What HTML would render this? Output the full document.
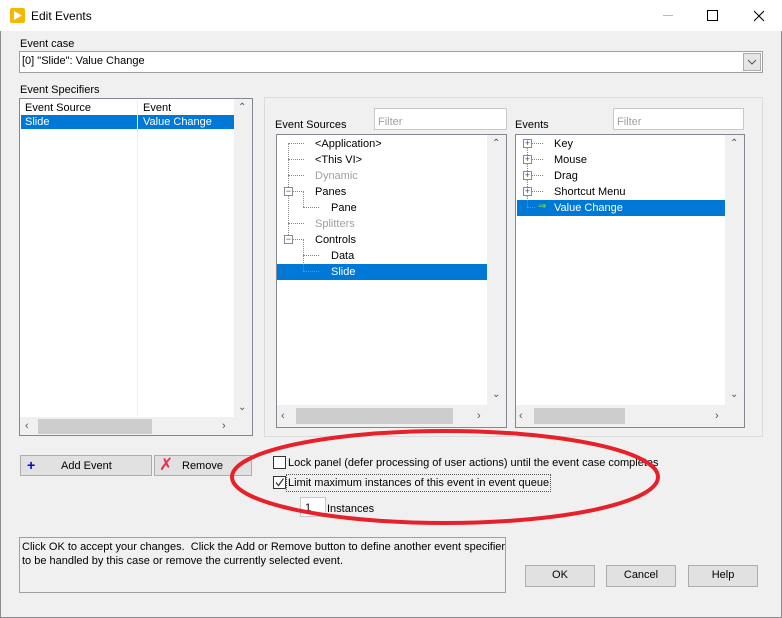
<!DOCTYPE html>
<html><head><meta charset="utf-8"><style>
*{box-sizing:border-box;margin:0;padding:0}
body{width:782px;height:618px;background:#f0f0f0;font-family:"Liberation Sans",sans-serif;font-size:11px;color:#000;position:relative;overflow:hidden}
.a{position:absolute}
.t{position:absolute;white-space:nowrap;line-height:14px}
.box{position:absolute;background:#fff;border:1px solid #828790}
.btn{position:absolute;background:#e1e1e1;border:1px solid #adadad;text-align:center;line-height:19px;font-size:12px}
.sel{position:absolute;background:#0078d7;color:#fff}
.gray{color:#a0a0a0}
.dv{position:absolute;border-left:1px dotted #888}
.dh{position:absolute;border-top:1px dotted #888}
.sb{position:absolute;background:#f0f0f0}
.pm{position:absolute;width:9px;height:9px;border:1px solid #8a8a8a;background:#fff;font-size:9px;line-height:7px;text-align:center;color:#2a4aa0}
</style></head><body>
<div class="a" style="left:0;top:0;width:782px;height:618px;border:1px solid #8c8c8c;border-top:none"></div>
<div class="a" style="left:0;top:0;width:782px;height:31px;background:#fff"></div>
<div class="a" style="left:10px;top:8px;width:15px;height:15px;background:#f5b800;border-radius:2px"></div>
<svg class="a" style="left:13px;top:10px" width="10" height="11"><path d="M1 1 L9 5.5 L1 10Z" fill="#fff"/></svg>
<div class="t" style="left:31px;top:9px;font-size:12px">Edit Events</div>
<div class="a" style="left:663px;top:15px;width:10px;height:1px;background:#bbb"></div>
<div class="a" style="left:707px;top:10px;width:11px;height:11px;border:1px solid #000"></div>
<svg class="a" style="left:753px;top:10px" width="12" height="12"><path d="M1 1L11 11M11 1L1 11" stroke="#000" stroke-width="1.1"/></svg>

<div class="t" style="left:20px;top:37px">Event case</div>
<div class="box" style="left:19px;top:51px;width:744px;height:22px;border-color:#a0a0a0"></div>
<div class="t" style="left:22px;top:54px">[0] "Slide": Value Change</div>
<div class="a" style="left:743px;top:53px;width:18px;height:18px;background:#e5e5e5;border:1px solid #adadad"></div>
<svg class="a" style="left:747px;top:59px" width="10" height="6"><path d="M1 1L5 5L9 1" stroke="#555" fill="none"/></svg>

<div class="t" style="left:20px;top:83px">Event Specifiers</div>
<div class="box" style="left:19px;top:98px;width:234px;height:338px"></div>
<div class="t" style="left:25px;top:101px">Event Source</div>
<div class="t" style="left:143px;top:101px">Event</div>
<div class="a" style="left:137px;top:100px;width:1px;height:316px;background:#f0f0f0"></div>
<div class="sel" style="left:21px;top:115px;width:116px;height:14px"></div>
<div class="sel" style="left:138px;top:115px;width:96px;height:14px"></div>
<div class="t" style="left:25px;top:115px;color:#fff">Slide</div>
<div class="t" style="left:143px;top:115px;color:#fff">Value Change</div>
<div class="sb" style="left:234px;top:99px;width:18px;height:318px"></div>
<div class="t" style="left:238px;top:101px;font-size:10px;color:#555">&#8963;</div>
<div class="t" style="left:238px;top:401px;font-size:10px;color:#555">&#8964;</div>
<div class="sb" style="left:20px;top:417px;width:232px;height:18px"></div>
<div class="a" style="left:38px;top:419px;width:114px;height:15px;background:#cdcdcd"></div>
<div class="t" style="left:25px;top:419px;color:#555">&#8249;</div>
<div class="t" style="left:222px;top:419px;color:#555">&#8250;</div>

<div class="a" style="left:264px;top:97px;width:499px;height:340px;border:1px solid #dcdcdc"></div>
<div class="t" style="left:275px;top:118px">Event Sources</div>
<div class="box" style="left:374px;top:108px;width:133px;height:22px;border-color:#c8c8c8"></div>
<div class="t gray" style="left:378px;top:115px">Filter</div>
<div class="box" style="left:276px;top:134px;width:231px;height:294px"></div>
<div class="sb" style="left:487px;top:135px;width:19px;height:270px"></div>
<div class="t" style="left:492px;top:137px;font-size:10px;color:#555">&#8963;</div>
<div class="t" style="left:492px;top:388px;font-size:10px;color:#555">&#8964;</div>
<div class="sb" style="left:277px;top:405px;width:229px;height:22px"></div>
<div class="a" style="left:296px;top:408px;width:157px;height:16px;background:#cdcdcd"></div>
<div class="t" style="left:281px;top:409px;color:#555">&#8249;</div>
<div class="t" style="left:477px;top:409px;color:#555">&#8250;</div>
<div class="sel" style="left:277px;top:264px;width:210px;height:16px"></div>
<div class="dv" style="left:288px;top:143px;height:96px"></div>
<div class="dh" style="left:288px;top:143px;width:16px"></div>
<div class="dh" style="left:288px;top:159px;width:16px"></div>
<div class="dh" style="left:288px;top:175px;width:16px"></div>
<div class="dh" style="left:288px;top:191px;width:16px"></div>
<div class="dh" style="left:288px;top:223px;width:16px"></div>
<div class="dh" style="left:288px;top:239px;width:16px"></div>
<div class="dv" style="left:303px;top:191px;height:16px"></div>
<div class="dh" style="left:303px;top:207px;width:16px"></div>
<div class="dv" style="left:303px;top:239px;height:32px"></div>
<div class="dh" style="left:303px;top:255px;width:16px"></div>
<div class="dh" style="left:303px;top:271px;width:16px"></div>
<div class="pm" style="left:284px;top:187px">−</div>
<div class="pm" style="left:284px;top:235px">−</div>
<div class="t" style="left:315px;top:137px">&lt;Application&gt;</div>
<div class="t" style="left:315px;top:153px">&lt;This VI&gt;</div>
<div class="t gray" style="left:315px;top:169px">Dynamic</div>
<div class="t" style="left:315px;top:185px">Panes</div>
<div class="t" style="left:331px;top:201px">Pane</div>
<div class="t gray" style="left:315px;top:217px">Splitters</div>
<div class="t" style="left:315px;top:233px">Controls</div>
<div class="t" style="left:331px;top:249px">Data</div>
<div class="t" style="left:331px;top:265px;color:#fff">Slide</div>

<div class="t" style="left:515px;top:118px">Events</div>
<div class="box" style="left:613px;top:108px;width:131px;height:22px;border-color:#c8c8c8"></div>
<div class="t gray" style="left:617px;top:115px">Filter</div>
<div class="box" style="left:515px;top:134px;width:230px;height:294px"></div>
<div class="sb" style="left:725px;top:135px;width:19px;height:270px"></div>
<div class="t" style="left:730px;top:137px;font-size:10px;color:#555">&#8963;</div>
<div class="t" style="left:730px;top:388px;font-size:10px;color:#555">&#8964;</div>
<div class="sb" style="left:516px;top:405px;width:228px;height:22px"></div>
<div class="a" style="left:534px;top:408px;width:91px;height:16px;background:#cdcdcd"></div>
<div class="t" style="left:519px;top:409px;color:#555">&#8249;</div>
<div class="t" style="left:715px;top:409px;color:#555">&#8250;</div>
<div class="sel" style="left:517px;top:200px;width:208px;height:16px"></div>
<div class="dv" style="left:527px;top:143px;height:64px"></div>
<div class="dh" style="left:531px;top:143px;width:12px"></div>
<div class="dh" style="left:531px;top:159px;width:12px"></div>
<div class="dh" style="left:531px;top:175px;width:12px"></div>
<div class="dh" style="left:531px;top:191px;width:12px"></div>
<div class="dh" style="left:527px;top:207px;width:8px"></div>
<div class="pm" style="left:523px;top:139px">+</div>
<div class="pm" style="left:523px;top:155px">+</div>
<div class="pm" style="left:523px;top:171px">+</div>
<div class="pm" style="left:523px;top:187px">+</div>
<div class="t" style="left:538px;top:200px;color:#7ee040;font-size:10px">&#8658;</div>
<div class="t" style="left:554px;top:137px">Key</div>
<div class="t" style="left:554px;top:153px">Mouse</div>
<div class="t" style="left:554px;top:169px">Drag</div>
<div class="t" style="left:554px;top:185px">Shortcut Menu</div>
<div class="t" style="left:554px;top:201px;color:#fff">Value Change</div>

<div class="btn" style="left:20px;top:455px;width:132px;height:21px;font-size:11px"><span style="position:absolute;left:6px;top:0;color:#0000d0;font-weight:bold;font-size:14px">+</span><span style="position:absolute;left:40px;top:1px">Add Event</span></div>
<div class="btn" style="left:154px;top:455px;width:98px;height:21px;font-size:11px"><span style="position:absolute;left:4px;top:-1px;color:#e83050;font-size:17px">&#10007;</span><span style="position:absolute;left:27px;top:1px">Remove</span></div>

<div class="a" style="left:273px;top:456px;width:13px;height:13px;border:1px solid #333;background:#fff"></div>
<div class="t" style="left:288px;top:456px;font-size:11px">Lock panel (defer processing of user actions) until the event case completes</div>
<div class="a" style="left:273px;top:476px;width:13px;height:13px;border:1px solid #333;background:#fff"></div>
<svg class="a" style="left:274px;top:477px" width="11" height="11"><path d="M2 5.5L4.5 8.5L9.5 1.5" stroke="#333" fill="none" stroke-width="1.2"/></svg>
<div class="t" style="left:288px;top:476px;font-size:11px;outline:1px dotted #555;outline-offset:1px">Limit maximum instances of this event in event queue</div>
<div class="box" style="left:300px;top:497px;width:26px;height:20px;border-color:#c8c8c8"></div>
<div class="t" style="left:305px;top:501px">1</div>
<div class="t" style="left:327px;top:502px">Instances</div>

<div class="a" style="left:19px;top:537px;width:487px;height:56px;border:1px solid #a0a0a0"></div>
<div class="t" style="left:22px;top:540px;font-size:11px;line-height:14px">Click OK to accept your changes.&nbsp; Click the Add or Remove button to define another event specifier<br>to be handled by this case or remove the currently selected event.</div>

<div class="btn" style="left:525px;top:565px;width:70px;height:22px;font-size:11px">OK</div>
<div class="btn" style="left:606px;top:565px;width:70px;height:22px;font-size:11px">Cancel</div>
<div class="btn" style="left:688px;top:565px;width:70px;height:22px;font-size:11px">Help</div>

<svg class="a" style="left:0;top:0" width="782" height="618"><ellipse cx="445" cy="477" rx="213" ry="46" fill="none" stroke="#e8202a" stroke-width="4"/></svg>
</body></html>
